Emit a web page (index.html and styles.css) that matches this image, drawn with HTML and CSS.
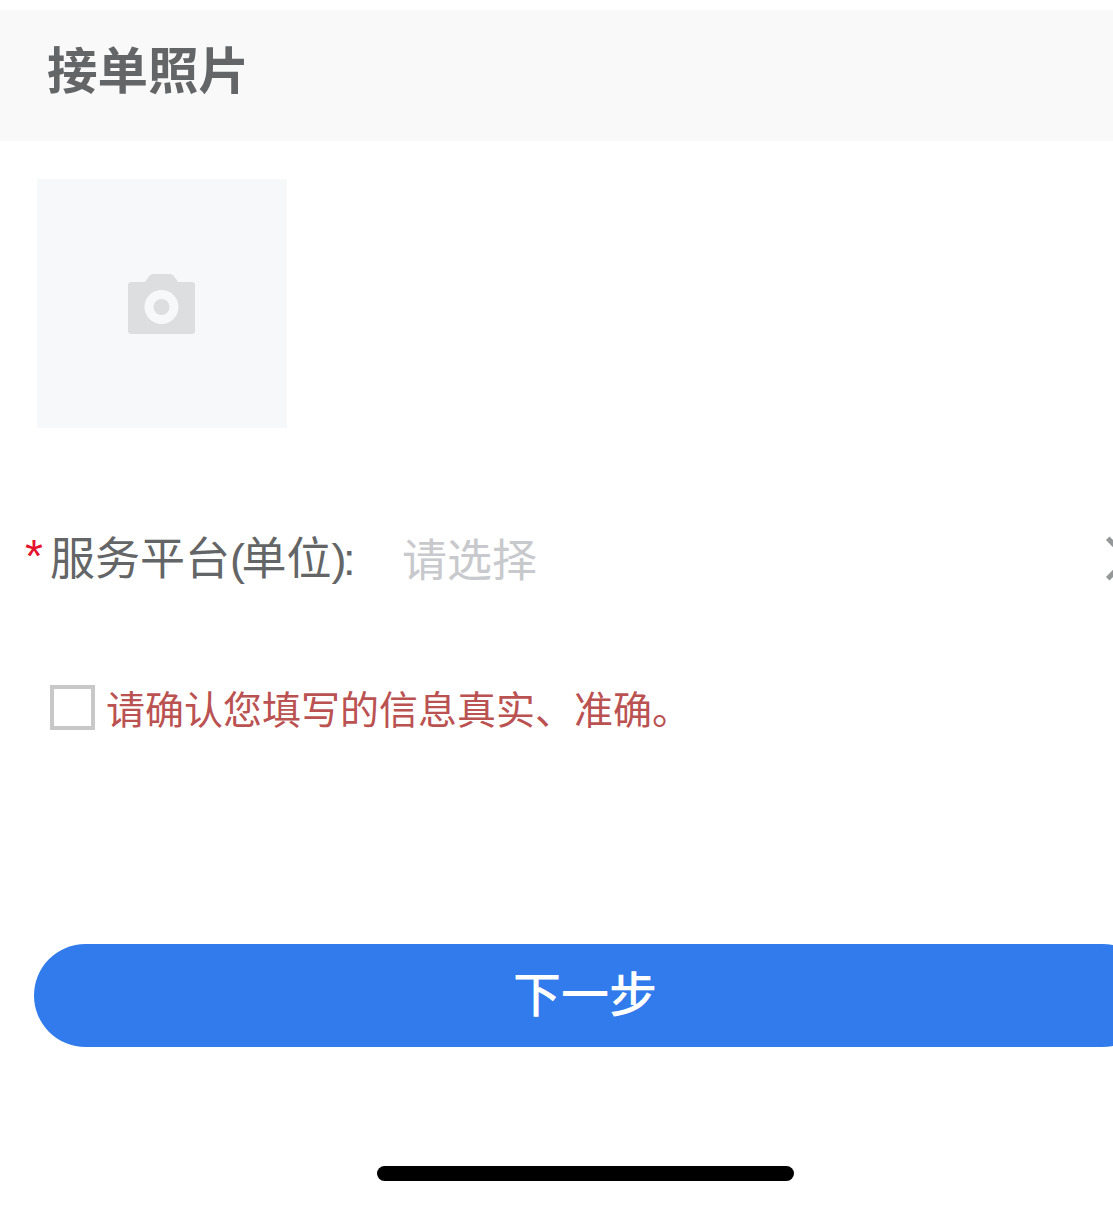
FILE: index.html

```html
<!DOCTYPE html>
<html lang="zh-CN">
<head>
  <meta charset="UTF-8" />
  <meta name="viewport" content="width=device-width, initial-scale=1.0" />
  <title>接单照片</title>
  <link rel="stylesheet" href="styles.css">
</head>
<body>
  <div class="header">接单照片</div>

  <div class="upload">
    <svg class="camera" viewBox="0 0 67 60" width="67" height="60">
      <path fill-rule="evenodd" fill="#dcdee0" d="M3 8h14l4.500-6.500q1-1.500 3-1.500h18q2 0 3 1.500l4.500 6.500h14q3 0 3 3v46q0 3-3 3h-61q-3 0-3-3v-46q0-3 3-3zM33.500 16a17 17 0 1 0 0 34a17 17 0 1 0 0-34zM33.500 25a8 8 0 1 1 0 16a8 8 0 1 1 0-16z"/>
    </svg>
  </div>

  <div class="field">
    <span class="star">*</span>
    <span class="label">服务平台<span class="punct">(</span>单位<span class="punct">)</span>:</span>
    <span class="placeholder">请选择</span>
    <span class="arrow"></span>
  </div>

  <div class="confirm">
    <span class="checkbox"></span>
    <span class="confirm-text">请确认您填写的信息真实、准确。</span>
  </div>

  <button type="button" class="next">下一步</button>

  <div class="home-bar"></div>
</body>
</html>
```

FILE: styles.css

```css
html, body {
  margin: 0;
  padding: 0;
}
body {
  width: 1113px;
  height: 1205px;
  overflow: hidden;
  background-color: #FFFFFF;
  font-family: "Noto Sans CJK SC", "Liberation Sans", sans-serif;
  padding-top: 10px;
  box-sizing: border-box;
}
.header {
  height: 131px;
  padding: 0 47px 18px;
  box-sizing: border-box;
  background-color: #F9F9F9;
  color: #646566;
  font-size: 50.500px;
  font-weight: bold;
  display: flex;
  align-items: center;
}
.upload {
  width: 250px;
  height: 249px;
  margin: 38px 0 0 37px;
  background-color: #F7F8FA;
  display: flex;
  align-items: center;
  justify-content: center;
}
.camera {
  margin: 0 2px 0 0;
}
.field {
  margin-top: 92px;
  height: 80px;
  padding-left: 25px;
  display: flex;
  align-items: center;
  position: relative;
}
.star {
  color: #E5112D;
  font-family: "Liberation Sans", sans-serif;
  font-size: 46px;
  width: 25px;
  margin-top: -8px;
}
.label {
  color: #646566;
  font-family: "Liberation Sans", "Noto Sans CJK SC", sans-serif;
  font-size: 45px;
  width: 352px;
  white-space: nowrap;
  margin-top: -10px;
}
.punct {
  letter-spacing: -3.500px;
}
.placeholder {
  color: #C8C9CC;
  font-size: 45px;
  margin-top: -6px;
}
.arrow {
  position: absolute;
  left: 1094px;
  top: 23px;
  width: 26px;
  height: 26px;
  border-top: 5px solid #969799;
  border-right: 5px solid #969799;
  transform: rotate(45deg);
}
.confirm {
  margin-top: 79px;
  margin-left: 50px;
  display: flex;
  align-items: center;
  gap: 11px;
}
.checkbox {
  width: 45px;
  height: 45px;
  box-sizing: border-box;
  border: 4px solid #C8C8C8;
}
.confirm-text {
  color: #BB5252;
  font-size: 39px;
}
.next {
  display: block;
  width: 1120px;
  height: 103px;
  margin: 209px 0 0 34px;
  border: none;
  border-radius: 52px;
  background-color: #317BEC;
  color: #FFFFFF;
  font-family: inherit;
  font-size: 48px;
  font-weight: 500;
  text-align: left;
  padding: 0 0 10px 479px;
}
.home-bar {
  width: 417px;
  height: 15px;
  margin: 119px 0 0 377px;
  border-radius: 8px;
  background-color: #000000;
}
```
